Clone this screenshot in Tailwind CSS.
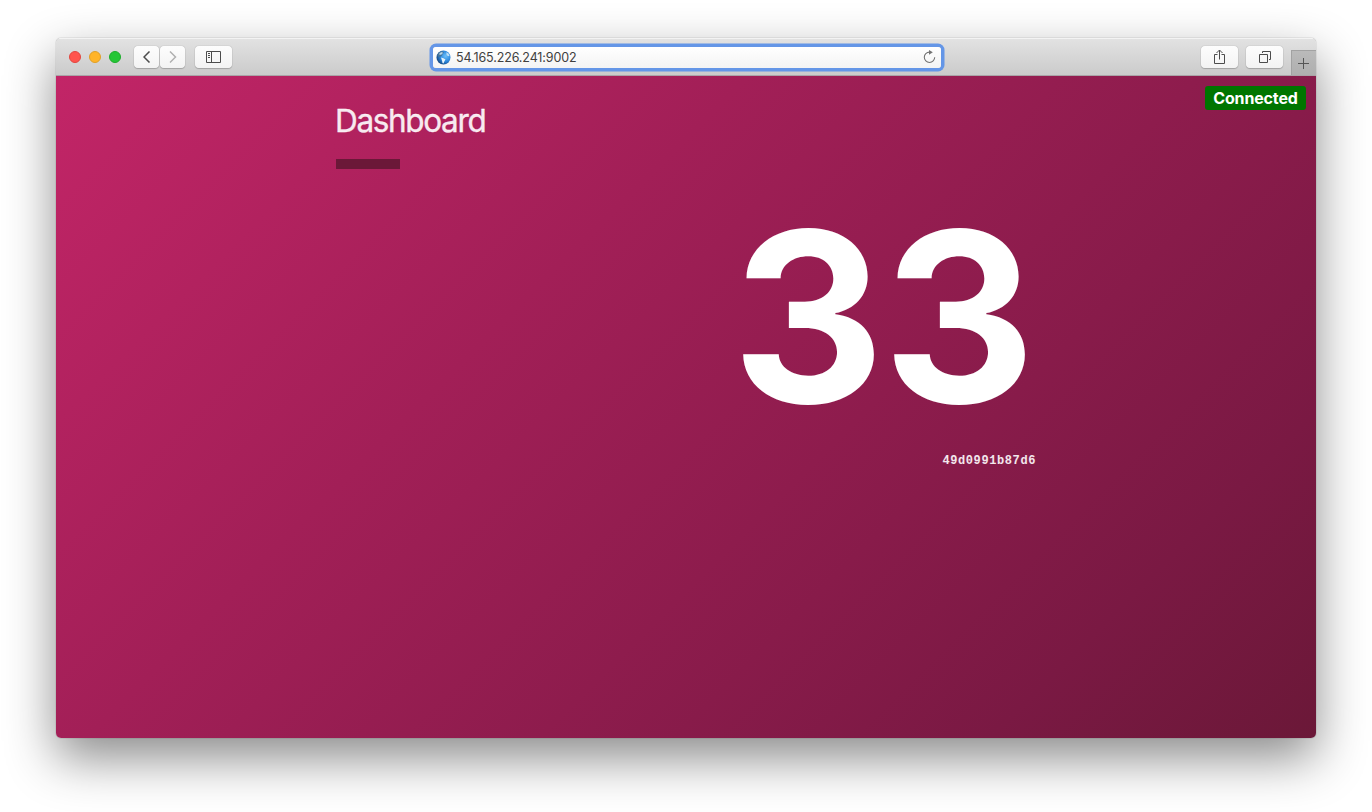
<!DOCTYPE html>
<html lang="en">
<head>
<meta charset="utf-8">
<title>Dashboard</title>
<script src="https://cdn.jsdelivr.net/npm/@tailwindcss/browser@4"></script>
</head>
<body class="h-[812px] overflow-hidden bg-white px-14 pt-[38px] font-['Inter',sans-serif]">
<div class="flex h-[700px] w-[1260px] flex-col overflow-hidden rounded-[5px] shadow-[0_0_1px_rgba(0,0,0,0.6),0_20px_50px_rgba(0,0,0,0.46)]">
  <header class="flex h-[38px] shrink-0 items-center border-t border-b border-t-[#f3f3f3] border-b-[#aaa4a7] bg-linear-to-b from-[#e2e2e2] to-[#cbcbcb] pl-[13px]">
    <div class="flex gap-2">
      <span class="size-3 rounded-full border border-[#e2463f] bg-[#ff544d]"></span>
      <span class="size-3 rounded-full border border-[#e0a028] bg-[#ffb429]"></span>
      <span class="size-3 rounded-full border border-[#1dad2b] bg-[#25c637]"></span>
    </div>
    <div class="ml-[13px] flex gap-px">
      <span class="flex h-[22px] w-[25px] items-center justify-center rounded-[4px] bg-linear-to-b from-[#fdfdfd] to-[#f3f3f3] shadow-[0_0_1px_rgba(0,0,0,0.4),0_1px_1px_rgba(0,0,0,0.18)]">
        <svg width="8" height="12" viewBox="0 0 8 12" fill="none" stroke="#4c4c4c" stroke-width="1.5"><path d="M6.500 .5 1 6l5.500 5.500"/></svg>
      </span>
      <span class="flex h-[22px] w-[25px] items-center justify-center rounded-[4px] bg-linear-to-b from-[#fdfdfd] to-[#f3f3f3] shadow-[0_0_1px_rgba(0,0,0,0.4),0_1px_1px_rgba(0,0,0,0.18)]">
        <svg width="8" height="12" viewBox="0 0 8 12" fill="none" stroke="#b0b0b0" stroke-width="1.5"><path d="M1 .5 6.500 6 1 11.500"/></svg>
      </span>
    </div>
    <span class="ml-[10px] flex h-[22px] w-[37px] items-center justify-center rounded-[4px] bg-linear-to-b from-[#fdfdfd] to-[#f3f3f3] shadow-[0_0_1px_rgba(0,0,0,0.4),0_1px_1px_rgba(0,0,0,0.18)]">
      <svg width="15" height="12" viewBox="0 0 15 12" fill="none" stroke="#4c4c4c"><path d="M.5 .5h14v11H.5zM5.500 .5v11M2 2.500h2M2 4.500h2M2 6.500h2"/></svg>
    </span>
    <div class="ml-[201px] flex h-[21px] w-[508px] items-center rounded-[3px] bg-linear-to-b from-white to-[#f4f4f4] pr-[5px] pl-[3px] shadow-[0_0_0_3.5px_#6496e7]">
      <svg class="shrink-0" width="15" height="15" viewBox="0 0 15 15"><defs><radialGradient id="sea" cx=".65" cy=".4" r=".7"><stop stop-color="#6cc0fa"/><stop offset=".55" stop-color="#2b86dc"/><stop offset="1" stop-color="#123e74"/></radialGradient></defs><circle cx="7.500" cy="7.500" r="7" fill="url(#sea)"/><path d="M1.200 5 3 2.300 6 1l2 1.500L6.500 4 6 5.500 4.500 6.500 3 7.500z" fill="#44749c"/><path d="M3.500 3 6 2l1 1-1.500 1.500-2 .5z" fill="#b9d6e8"/><path d="M5 7.500 7.500 8.300 9.500 9.500 8.300 11.500 7.500 13.500 6.500 13 6 10.500z" fill="#e4f2fb"/><path d="M10.300 2.300l2 1.200 1.300 2-1.400.8-1.600-1.300z" fill="#bfe0f8"/></svg>
      <span class="ml-[5px] grow pt-px text-[12.5px] leading-[22px] tracking-[-0.12px] text-[#3f3f3f]">54.165.226.241:9002</span>
      <svg class="shrink-0" width="13" height="14" viewBox="0 0 13 14" fill="none" stroke="#737373" stroke-width="1.100"><path d="M6.500 2.100a5.200 5.200 0 1 0 5.200 5.200"/><path d="M6 0 9.800 2.300 6 4.700z" fill="#737373" stroke="none"/></svg>
    </div>
    <span class="ml-[260px] flex h-[22px] w-[37px] items-center justify-center rounded-[4px] bg-linear-to-b from-[#fdfdfd] to-[#f3f3f3] shadow-[0_0_1px_rgba(0,0,0,0.4),0_1px_1px_rgba(0,0,0,0.18)]">
      <svg width="11" height="16" viewBox="0 0 11 16" fill="none" stroke="#4c4c4c"><path d="M3.500 5.500h-3v9h10v-9h-3M5.500 10.500V1.200M2.500 4l3-3 3 3"/></svg>
    </span>
    <span class="ml-2 flex h-[22px] w-[37px] items-center justify-center rounded-[4px] bg-linear-to-b from-[#fdfdfd] to-[#f3f3f3] shadow-[0_0_1px_rgba(0,0,0,0.4),0_1px_1px_rgba(0,0,0,0.18)]">
      <svg width="12" height="12" viewBox="0 0 12 12" fill="none" stroke="#4c4c4c"><path d="M.5 3.500h8v8h-8zM3.500 2V.5h8v8H10"/></svg>
    </span>
    <span class="ml-auto flex h-[25px] w-[25px] items-center border-t border-l border-[#a2a2a2] bg-linear-to-b from-[#bababa] to-[#afafaf] pl-[6px] self-end">
      <svg width="11" height="11" viewBox="0 0 11 11" stroke="#555"><path d="M0 5.500h11M5.500 0v11"/></svg>
    </span>
  </header>
  <main class="relative grow bg-[linear-gradient(135deg,#c22567_0%,#a21f57_36%,#7a1943_83%,#6b1838_100%)] pt-[22px]">
    <span class="absolute top-[10px] right-[10px] flex h-6 w-[101px] items-center justify-center rounded-[3px] bg-[#007500] text-[16px] font-bold tracking-[-0.15px] whitespace-nowrap text-white">Connected</span>
    <div class="mx-auto w-[700px]">
      <h1 class="h-[44px] -ml-px pt-px text-[31.5px] leading-[43px] tracking-[-1.35px] text-white/90 [-webkit-text-stroke:0.3px]">Dashboard</h1>
      <div class="mt-[17px] h-[10px] w-16 bg-[#6b1838]"></div>
      <div class="mt-[28px] flex h-[240px] items-center justify-end pr-[2px] text-[237px] leading-[240px] font-bold tracking-[-1.8px] text-white">33</div>
      <p class="mt-[17px] text-right font-['Liberation_Mono',monospace] text-[12px] leading-[14px] font-bold tracking-[0.6px] text-white/90">49d0991b87d6</p>
    </div>
  </main>
</div>
</body>
</html>
